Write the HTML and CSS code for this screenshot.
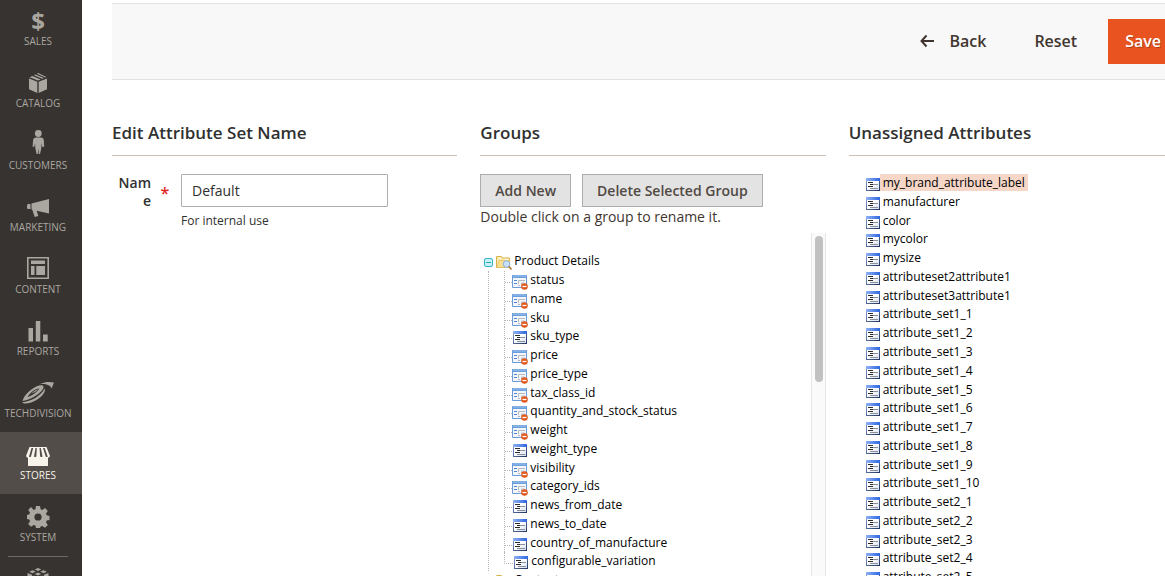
FILE: index.html
```
<!DOCTYPE html>
<html lang="en">
<head>
  <meta charset="UTF-8">
  <meta name="viewport" content="width=device-width, initial-scale=1.0">
  <title>Attribute Sets</title>
  <link rel="stylesheet" href="styles.css">
</head>
<body>
  <!-- TREE ICONS -->
  <svg class="sprite" aria-hidden="true">
    <defs>
      <linearGradient id="bar" x1="0" x2="1" y1="0" y2="0">
        <stop offset="0" stop-color="#8fb2f5"/>
        <stop offset="1" stop-color="#2f66e0"/>
      </linearGradient>
      <linearGradient id="edge" x1="0" x2="1" y1="0" y2="1">
        <stop offset="0" stop-color="#8aa4dc"/>
        <stop offset="1" stop-color="#1d3157"/>
      </linearGradient>
      <linearGradient id="paper" x1="0" x2="1" y1="0" y2="1">
        <stop offset="0.4" stop-color="#ffffff"/>
        <stop offset="1" stop-color="#d5def3"/>
      </linearGradient>
    </defs>
    <symbol id="leaf" viewBox="0 0 16 16">
      <g shape-rendering="crispEdges">
        <path d="M1 1h14v13H1z" fill="url(#edge)"/>
        <path d="M2 4h12v9H2z" fill="url(#paper)"/>
        <path d="M1 1h14v3H1z" fill="url(#bar)"/>
        <path d="M3 5h5v1H3zM5 7h3v1H5zM3 9h5v1H3z" fill="#2a2a2a"/>
        <path d="M8 7h5v1H8zM5 11h8v1H5z" fill="#8a8f99"/>
      </g>
    </symbol>
    <symbol id="system" viewBox="0 0 16 16">
      <path d="M.5 1.500h14v12H.5z" fill="#f3f6fb" stroke="#6a9bd8"/>
      <path d="M0 1h15v3H0z" fill="#6d9fdc"/>
      <path d="M1 2h13" stroke="#9cc2ee"/>
      <path d="M2 6.500h3M2 9.500h3" stroke="#4f86d6" fill="none"/>
      <path d="M6.500 10V6.500H13M6 11.500h2M9.500 9h3v2h-3z" stroke="#b5b9be" fill="none"/>
      <circle cx="12.500" cy="12.500" r="3.300" fill="#e2571c"/>
      <path d="M10.500 12.500h4" stroke="#fff" stroke-width="1.300"/>
    </symbol>
    <symbol id="folder" viewBox="0 0 16 16">
      <path d="M.5 12.500v-11h5l1 1.500h7v9.500z" fill="#fbe9a8" stroke="#d9b24c"/>
      <path d="M1 12.500l2-7h11l-1.500 7z" fill="#f9df92" stroke="#dfbb5a" stroke-width=".6"/>
      <path d="M2 3h3M8 4.500h5" stroke="#fff8dc"/>
      <circle cx="10.500" cy="9" r="3.300" fill="#c9e2fb" stroke="#8fb0dc"/>
      <path d="M13 11.500l2.500 3" stroke="#b07a3c" stroke-width="1.600"/>
    </symbol>
  </svg>

  <div class="page">
    <!-- LEFT SIDE - ADMIN MENU -->
    <nav class="menu">
      <a class="menu-item" href="#">
        <svg class="menu-icon" viewBox="0 0 28 28"><text class="dollar" x="14" y="24">$</text></svg>
        <span>Sales</span>
      </a>
      <a class="menu-item" href="#">
        <svg class="menu-icon" viewBox="0 0 28 28"><path d="M5 10.500l8.300 3.300V25L5 21.200zM23 10.500l-8.300 3.300V25l8.300-3.800zM5.600 9.200l2.700-1.300 8.400 3.500-2.700 1.100zM9.800 7.200l1.600-.8 8.500 3.500-1.700.9zM12.800 5.800l1.400-.7 8.200 3.900-1.100.6z"/></svg>
        <span>Catalog</span>
      </a>
      <a class="menu-item" href="#">
        <svg class="menu-icon" viewBox="0 0 28 28"><circle cx="14.300" cy="3.500" r="3.400"/><path d="M11.500 7.500h6q2 .3 2.300 2.500l.4 6.500-1.800.8-.8-4-.4 5.500-1.200 5.200h-1.200l-.5-5.500-.5 5.500h-1.200l-1.200-5.200-.4-5.500-.8 4-1.600-.8.500-6.500q.4-2.200 2.400-2.500z"/></svg>
        <span>Customers</span>
      </a>
      <a class="menu-item" href="#">
        <svg class="menu-icon" viewBox="0 0 28 28"><path d="M3.500 12h3v5h-3q-1-2.500 0-5zM7.500 11.500L25 7v14.500l-12.300-2.700 1.600 5.200-3.600 1-2.500-7.400h-.7z"/></svg>
        <span>Marketing</span>
      </a>
      <a class="menu-item" href="#">
        <svg class="menu-icon" viewBox="0 0 28 28"><path fill-rule="evenodd" d="M3 3h22v22H3zM4.600 4.600v18.800h18.800V4.600z"/><path d="M7 6.500h14v3.500H7zM7 12h3.500v9H7zM12.300 12H21v9h-8.700z"/></svg>
        <span>Content</span>
      </a>
      <a class="menu-item" href="#">
        <svg class="menu-icon" viewBox="0 0 28 28"><path d="M4.500 12H9v13.500H4.500zM11.800 5h4.500v20.500h-4.500zM19 18.500h4.700v7H19z"/></svg>
        <span>Reports</span>
      </a>
      <a class="menu-item" href="#">
        <svg class="menu-icon" viewBox="0 0 28 28"><path fill-rule="evenodd" d="M-1.500 23C0 17 8 9.500 15 7.500c5-1.200 6 1.500 2.500 5.500C13 18 5 22-1.500 23zM3.500 19C8 18 13 14 15.500 10.500 11 11 6.500 14 3.500 19z"/><path d="M-2 24.300C7 23.800 18 17 20.500 10.500c2 3-3 9-9 12-5 2.700-11 4.200-13.500 1.800z"/><path d="M16 6c5-2.500 10-2.500 14-1.500l-2.500 6c-1-3.500-5-5-11.500-4.500z"/><path d="M7 15.500c3-2.500 5-3.500 7-4-1.500 2-4 3.300-7 4z"/></svg>
        <span>Techdivision</span>
      </a>
      <a class="menu-item active" href="#">
        <svg class="menu-icon" viewBox="0 0 28 28"><path d="M5.500 7h17l3.500 9q-.5 1.700-2 1.700V26H4v-8.300q-1.500 0-2-1.700z"/><path class="cut" d="M7.500 8h1.700L7 16.500q-1 1-2 0zM11.500 8h1.300l-.5 8.500q-1.200 1-2.300 0zM15.500 8h1.300l1.700 8.500q-1.200 1-2.300 0zM19 8h1.700l3 8.500q-1 1-2 0z"/></svg>
        <span>Stores</span>
      </a>
      <a class="menu-item" href="#">
        <svg class="menu-icon" viewBox="0 0 28 28"><path fill-rule="evenodd" d="M12 4h4l.6 3.200 1.700.7 2.700-1.800 2.800 2.800-1.800 2.700.7 1.700 2.800.6v4l-2.800.6-.7 1.700 1.800 2.700-2.800 2.800-2.700-1.800-1.700.7L16 26h-4l-.6-2.400-1.700-.7L7 24.700l-2.800-2.800L6 19.200l-.7-1.700-2.300-.6v-4l2.300-.6.7-1.700-1.800-2.700L7 5.100l2.700 2.800 1.700-.7zM14 11.400a3.600 3.600 0 1 0 0 7.200 3.600 3.600 0 0 0 0-7.200z"/></svg>
        <span>System</span>
      </a>
      <a class="menu-item last" href="#" aria-label="Partners">
        <svg class="menu-icon" viewBox="0 0 28 28"><path d="M14 4l3.300 1.500L14 7l-3.300-1.500zM8.500 6.200l3.300 1.400-3.300 1.600-3.300-1.500zM19.500 6.200l3.300 1.500-3.300 1.500-3.300-1.600zM14 8.500l3.300 1.500-3.300 1.500-3.300-1.500zM3.500 9L8 10.800v4.700l-4.500-2zM24.500 9L20 10.800v4.700l4.500-2zM9.500 11.500l3.800 1.500v5.500l-3.800-2zM18.500 11.500L14.700 13v5.500l3.800-2z"/></svg>
      </a>
    </nav>

    <main class="content">
      <!-- PAGE ACTIONS -->
      <div class="actions">
        <button class="action" type="button">
          <svg class="arrow" viewBox="0 0 14 14"><path d="M6.500 1.500L1.500 7l5 5.500M1.500 7H14"/></svg>
          Back
        </button>
        <button class="action" type="button">Reset</button>
        <button class="action primary" type="button">Save</button>
      </div>

      <div class="columns">
        <section class="column">
          <h2>Edit Attribute Set Name</h2>
          <div class="field">
            <label for="set-name">Name</label>
            <span class="required">*</span>
            <div class="control">
              <input id="set-name" type="text" value="Default">
              <div class="note">For internal use</div>
            </div>
          </div>
        </section>

        <section class="column">
          <h2>Groups</h2>
          <div class="buttons">
            <button class="button" type="button">Add New</button>
            <button class="button" type="button">Delete Selected Group</button>
          </div>
          <p class="hint">Double click on a group to rename it.</p>
          <div class="tree-panel">
            <div class="tree">
              <div class="row group"><span class="toggle"></span><svg class="icon"><use href="#folder"/></svg><span class="name">Product Details</span></div>
              <ul class="list children">
                <li class="row"><svg class="icon"><use href="#system"/></svg><span class="name">status</span></li>
                <li class="row"><svg class="icon"><use href="#system"/></svg><span class="name">name</span></li>
                <li class="row"><svg class="icon"><use href="#system"/></svg><span class="name">sku</span></li>
                <li class="row"><svg class="icon"><use href="#leaf"/></svg><span class="name">sku_type</span></li>
                <li class="row"><svg class="icon"><use href="#system"/></svg><span class="name">price</span></li>
                <li class="row"><svg class="icon"><use href="#system"/></svg><span class="name">price_type</span></li>
                <li class="row"><svg class="icon"><use href="#system"/></svg><span class="name">tax_class_id</span></li>
                <li class="row"><svg class="icon"><use href="#system"/></svg><span class="name">quantity_and_stock_status</span></li>
                <li class="row"><svg class="icon"><use href="#system"/></svg><span class="name">weight</span></li>
                <li class="row"><svg class="icon"><use href="#leaf"/></svg><span class="name">weight_type</span></li>
                <li class="row"><svg class="icon"><use href="#system"/></svg><span class="name">visibility</span></li>
                <li class="row"><svg class="icon"><use href="#system"/></svg><span class="name">category_ids</span></li>
                <li class="row"><svg class="icon"><use href="#leaf"/></svg><span class="name">news_from_date</span></li>
                <li class="row"><svg class="icon"><use href="#leaf"/></svg><span class="name">news_to_date</span></li>
                <li class="row"><svg class="icon"><use href="#leaf"/></svg><span class="name">country_of_manufacture</span></li>
                <li class="row"><svg class="icon"><use href="#leaf"/></svg><span class="name">configurable_variation</span></li>
              </ul>
              <div class="row group"><span class="toggle"></span><svg class="icon"><use href="#folder"/></svg><span class="name">Content</span></div>
            </div>
            <div class="scrollbar"><div class="thumb"></div></div>
          </div>
        </section>

        <section class="column">
          <h2>Unassigned Attributes</h2>
          <ul class="list unassigned">
            <li class="row"><svg class="icon"><use href="#leaf"/></svg><span class="name selected">my_brand_attribute_label</span></li>
            <li class="row"><svg class="icon"><use href="#leaf"/></svg><span class="name">manufacturer</span></li>
            <li class="row"><svg class="icon"><use href="#leaf"/></svg><span class="name">color</span></li>
            <li class="row"><svg class="icon"><use href="#leaf"/></svg><span class="name">mycolor</span></li>
            <li class="row"><svg class="icon"><use href="#leaf"/></svg><span class="name">mysize</span></li>
            <li class="row"><svg class="icon"><use href="#leaf"/></svg><span class="name">attributeset2attribute1</span></li>
            <li class="row"><svg class="icon"><use href="#leaf"/></svg><span class="name">attributeset3attribute1</span></li>
            <li class="row"><svg class="icon"><use href="#leaf"/></svg><span class="name">attribute_set1_1</span></li>
            <li class="row"><svg class="icon"><use href="#leaf"/></svg><span class="name">attribute_set1_2</span></li>
            <li class="row"><svg class="icon"><use href="#leaf"/></svg><span class="name">attribute_set1_3</span></li>
            <li class="row"><svg class="icon"><use href="#leaf"/></svg><span class="name">attribute_set1_4</span></li>
            <li class="row"><svg class="icon"><use href="#leaf"/></svg><span class="name">attribute_set1_5</span></li>
            <li class="row"><svg class="icon"><use href="#leaf"/></svg><span class="name">attribute_set1_6</span></li>
            <li class="row"><svg class="icon"><use href="#leaf"/></svg><span class="name">attribute_set1_7</span></li>
            <li class="row"><svg class="icon"><use href="#leaf"/></svg><span class="name">attribute_set1_8</span></li>
            <li class="row"><svg class="icon"><use href="#leaf"/></svg><span class="name">attribute_set1_9</span></li>
            <li class="row"><svg class="icon"><use href="#leaf"/></svg><span class="name">attribute_set1_10</span></li>
            <li class="row"><svg class="icon"><use href="#leaf"/></svg><span class="name">attribute_set2_1</span></li>
            <li class="row"><svg class="icon"><use href="#leaf"/></svg><span class="name">attribute_set2_2</span></li>
            <li class="row"><svg class="icon"><use href="#leaf"/></svg><span class="name">attribute_set2_3</span></li>
            <li class="row"><svg class="icon"><use href="#leaf"/></svg><span class="name">attribute_set2_4</span></li>
            <li class="row"><svg class="icon"><use href="#leaf"/></svg><span class="name">attribute_set2_5</span></li>
          </ul>
        </section>
      </div>
    </main>
  </div>
</body>
</html>
```
FILE: styles.css
```
* {
  box-sizing: border-box;
}

body {
  margin: 0;
  height: 100vh;
  overflow: hidden;
  background: #fff;
  color: #41362f;
  font-family: "Open Sans", "Noto Sans", sans-serif;
  font-size: 14px;
}

.sprite {
  position: absolute;
  width: 0;
  height: 0;
}

.page {
  display: flex;
  align-items: flex-start;
}

/* Admin menu */
.menu {
  width: 82px;
  flex-shrink: 0;
  margin-top: -2px;
  background: #373330;
}

.menu-item {
  display: flex;
  flex-direction: column;
  align-items: center;
  height: 62px;
  padding: 8px 6px 0 0;
  color: #aaa6a0;
  font-size: 10px;
  line-height: 14px;
  text-decoration: none;
  text-transform: uppercase;
}

.menu-icon {
  width: 28px;
  height: 28px;
  flex-shrink: 0;
  fill: #aaa6a0;
  overflow: visible;
}

.dollar {
  font-size: 24px;
  font-weight: 700;
  text-anchor: middle;
}

.menu-item.active {
  background: #524d49;
  color: #f7f3eb;
}

.active .menu-icon {
  fill: #f7f3eb;
}

.active .cut {
  fill: #524d49;
}

.menu-item.last::before {
  content: "";
  width: 60px;
  height: 1px;
  margin: -8px 0 7px;
  background: #736963;
}

/* The content is wider than the window and runs off to the right */
.content {
  flex: 1;
  min-width: 0;
  margin: 3px -29px 0 30px;
}

.actions {
  display: flex;
  justify-content: flex-end;
  align-items: center;
  height: 77px;
  padding-right: 16px;
  background: #f8f8f8;
  border-top: 1px solid #e3e3e3;
  border-bottom: 1px solid #e3e3e3;
}

.action {
  display: flex;
  align-items: center;
  gap: 15px;
  height: 45px;
  padding: 0 17px 2px;
  margin-left: 14px;
  border: 0;
  background: none;
  color: #41362f;
  font-family: inherit;
  font-size: 16px;
  font-weight: 600;
}

.action.primary {
  background: #e9531f;
  color: #fff;
  text-shadow: 1px 1px 0 rgba(0, 0, 0, 0.25);
}

.arrow {
  width: 14px;
  height: 14px;
  fill: none;
  stroke: #41362f;
  stroke-width: 2;
}

/* Columns */
.columns {
  display: grid;
  grid-template-columns: repeat(3, 1fr);
  gap: 23px;
  margin-top: 42px;
}

h2 {
  margin: 0 0 18px;
  padding-bottom: 12px;
  border-bottom: 1px solid #cac3b4;
  color: #303030;
  font-size: 17px;
  font-weight: 600;
  line-height: 21px;
}

.field {
  display: flex;
  align-items: flex-start;
  color: #303030;
}

.field label {
  width: 39px;
  font-weight: 600;
  line-height: 18px;
  text-align: right;
  word-break: break-all;
}

.required {
  width: 30px;
  padding-right: 2px;
  color: #e22626;
  font-size: 16px;
  font-weight: 600;
  line-height: 38px;
  text-align: center;
}

.control input {
  display: block;
  width: 207px;
  height: 33px;
  padding: 0 10px;
  border: 1px solid #adadad;
  border-radius: 1px;
  color: #303030;
  font-family: inherit;
  font-size: 14px;
}

.note {
  margin-top: 5px;
  font-size: 12px;
  line-height: 17px;
}

.buttons {
  display: flex;
  gap: 11px;
}

.button {
  height: 33px;
  padding: 0 14px;
  border: 1px solid #adadad;
  background: #e3e3e3;
  color: #514943;
  font-family: inherit;
  font-size: 14px;
  font-weight: 600;
}

.hint {
  margin: 0 0 6px;
  line-height: 20px;
}

/* Tree */
.tree-panel {
  display: flex;
}

.tree {
  flex: 1;
  padding-top: 19px;
}

.list {
  display: grid;
  grid-auto-rows: minmax(0, 1fr);
  margin: 0;
  padding: 0;
  list-style: none;
}

.row {
  display: flex;
  align-items: flex-start;
  color: #000;
  font-size: 12px;
  line-height: 17px;
}

.icon {
  width: 16px;
  height: 16px;
  margin-top: 3px;
  flex-shrink: 0;
}

.name {
  padding: 0 2px;
}

.selected {
  margin-left: -1px;
  padding: 0 3px;
  background: #f5d6c7;
}

.group {
  height: 19px;
  padding-left: 4px;
}

.toggle {
  width: 9px;
  height: 9px;
  margin: 6px 3px 0 0;
  border: 1px solid #39b3cc;
  border-radius: 2px;
  background: linear-gradient(#39a5bd, #39a5bd) center / 5px 1px no-repeat #c5f1f8;
}

.children {
  height: 300px;
  margin-left: 8px;
  padding-left: 15px;
  border-left: 1px dotted #b5b5b5;
}

.children .row {
  border-left: 1px dotted #b5b5b5;
}

.children .row::before {
  content: "";
  width: 7px;
  height: 11px;
  border-bottom: 1px dotted #b5b5b5;
}

.children .row:last-child {
  border-left: 0;
}

.children .row:last-child::before {
  width: 8px;
  border-left: 1px dotted #b5b5b5;
}

.scrollbar {
  width: 15px;
  padding: 3px;
  background: #fafafa;
  border-left: 1px solid #e6e6e6;
  border-right: 1px solid #e6e6e6;
}

.thumb {
  width: 8px;
  height: 146px;
  border-radius: 4px;
  background: #c1c1c1;
}

.unassigned {
  height: 413px;
  padding-left: 16px;
}
```
